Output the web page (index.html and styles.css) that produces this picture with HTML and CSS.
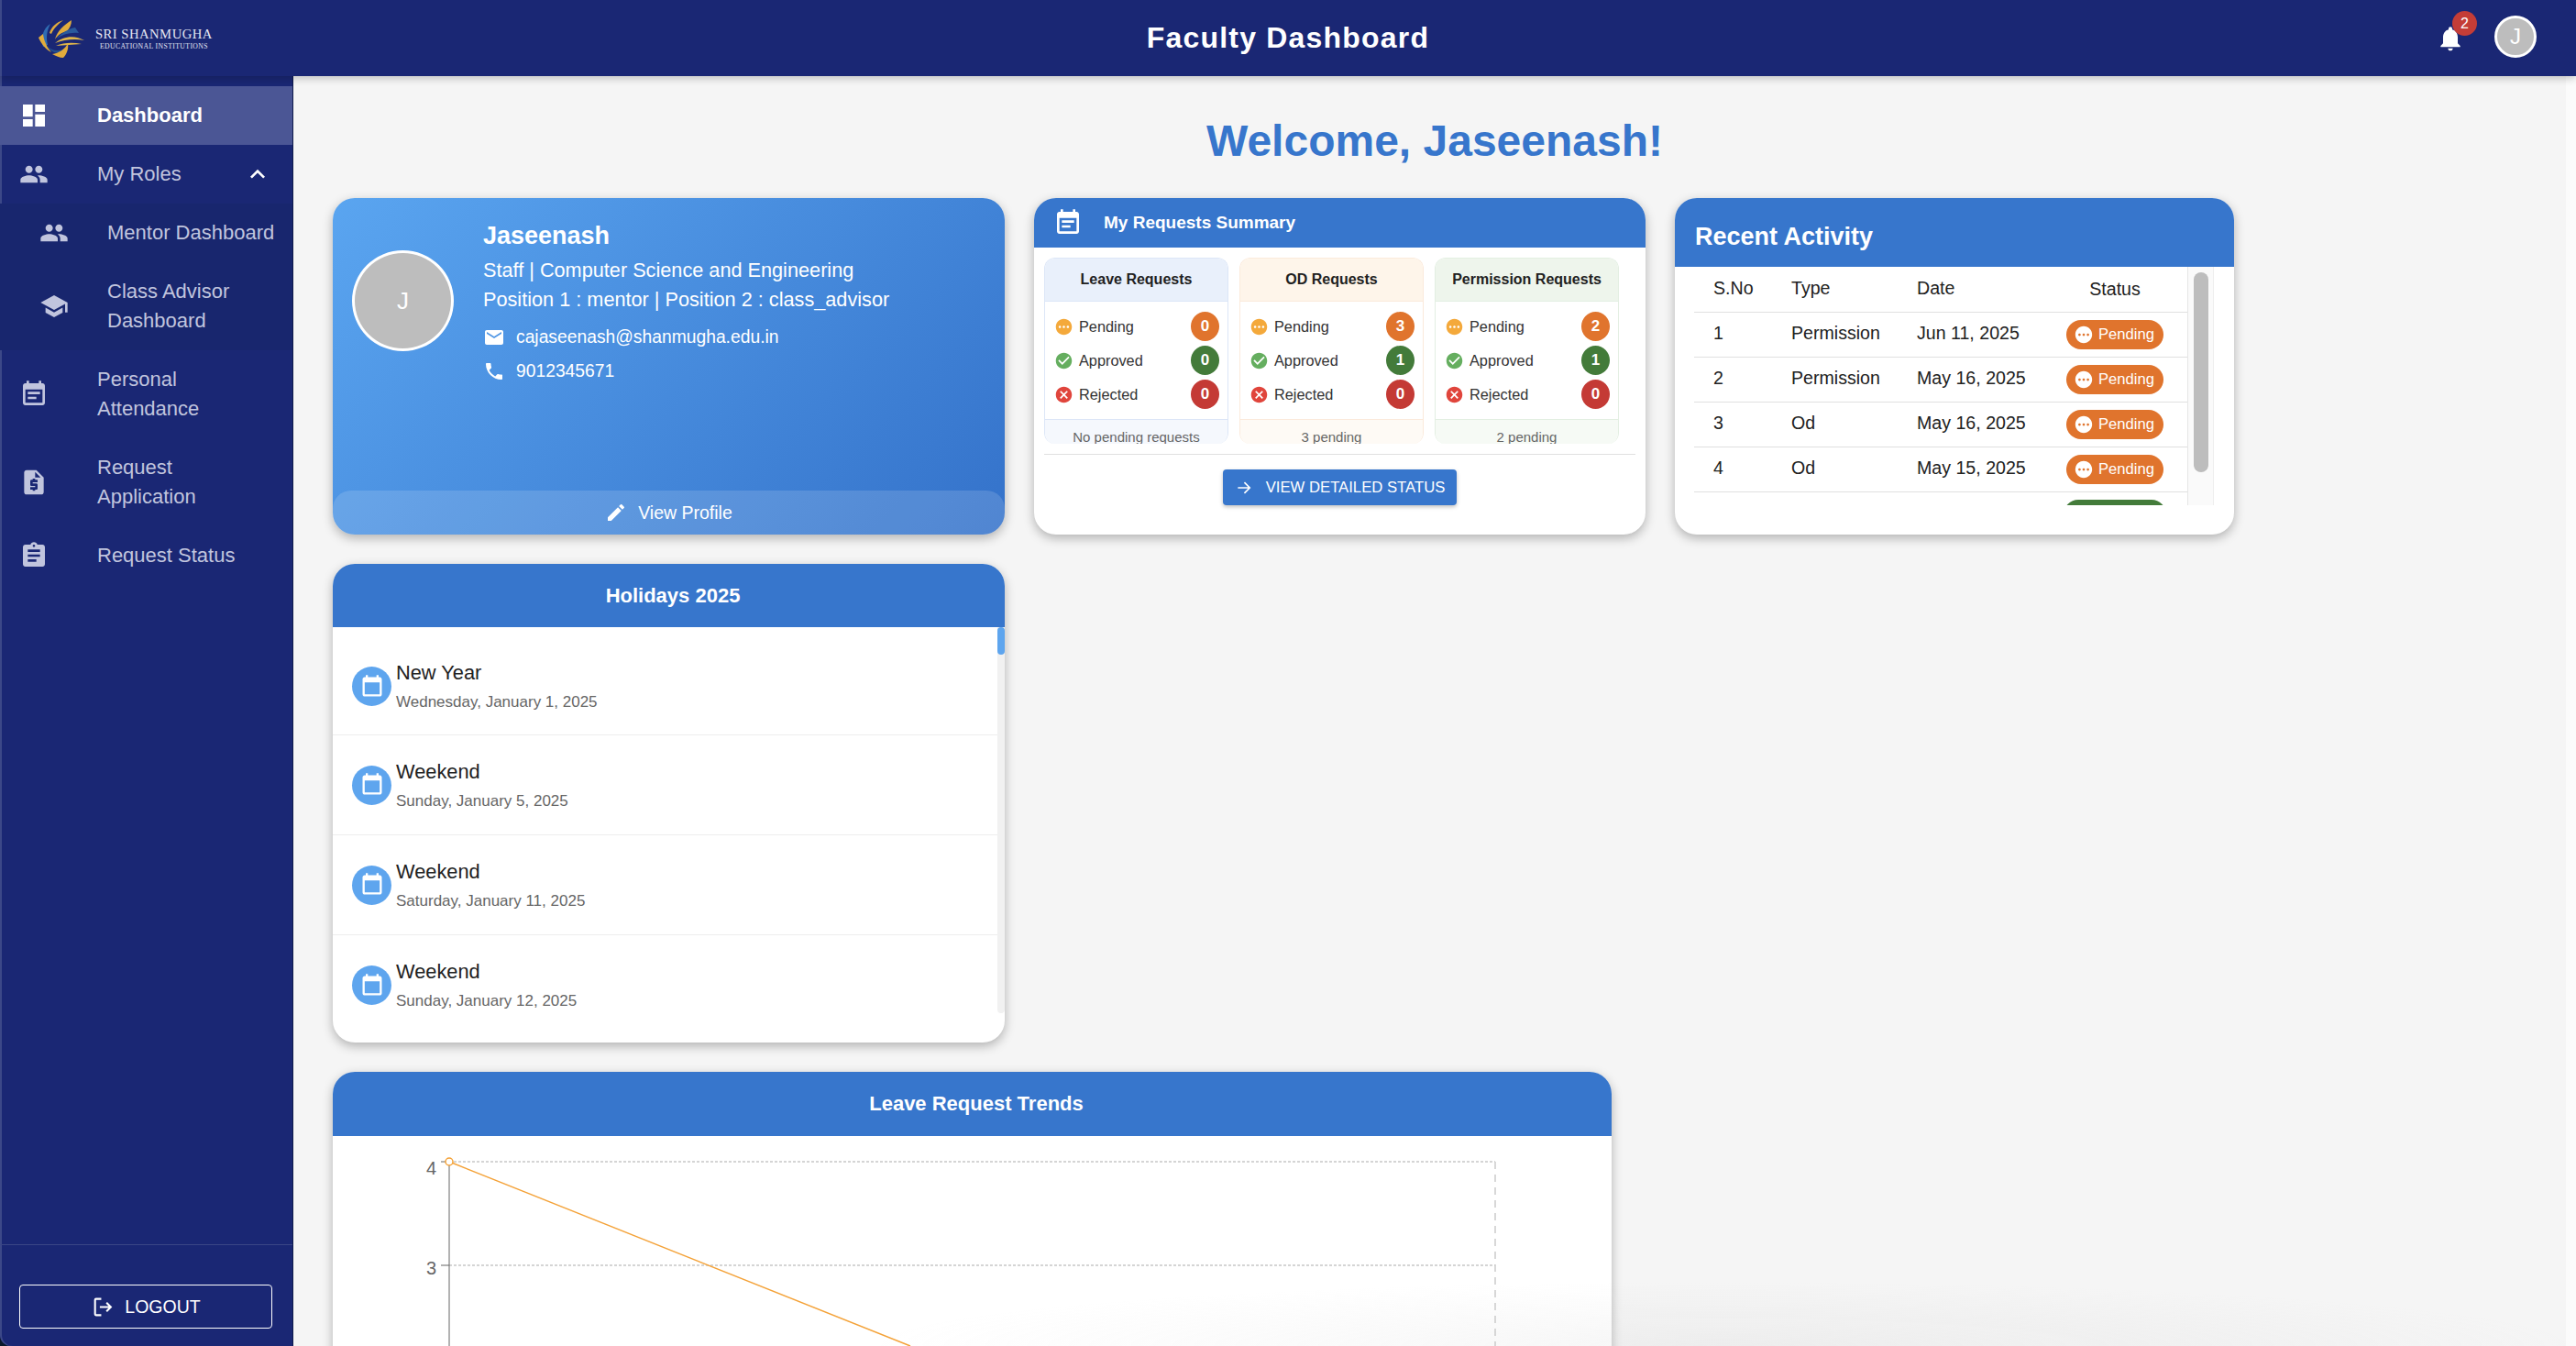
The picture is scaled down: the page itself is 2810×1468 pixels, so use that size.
FILE: index.html
```html
<!DOCTYPE html>
<html lang="en">
<head>
    <meta charset="UTF-8">
    <meta name="viewport" content="width=device-width, initial-scale=1.0">
    <title>Faculty Dashboard</title>
    <link rel="stylesheet" href="styles.css">
</head>
<body>
    <svg class="icon-defs" width="0" height="0">
        <defs>
            <symbol id="i-calnote" viewBox="0 0 24 24"><path d="M19 3h-1V1h-2v2H8V1H6v2H5c-1.11 0-2 .9-2 2v14c0 1.1.89 2 2 2h14c1.1 0 2-.9 2-2V5c0-1.1-.9-2-2-2zm0 16H5V8h14v11zM7 10h10v2H7zm0 4h7v2H7z"/></symbol>
            <symbol id="i-people" viewBox="0 0 24 24"><path d="M16 11c1.66 0 2.99-1.34 2.99-3S17.66 5 16 5s-3 1.34-3 3 1.34 3 3 3zm-8 0c1.66 0 2.99-1.34 2.99-3S9.66 5 8 5 5 6.34 5 8s1.34 3 3 3zm0 2c-2.33 0-7 1.17-7 3.5V19h14v-2.5C15 14.17 10.33 13 8 13zm8 0c-.29 0-.62.02-.97.05 1.16.84 1.97 1.97 1.97 3.45V19h6v-2.5c0-2.33-4.67-3.5-7-3.5z"/></symbol>
            <symbol id="i-pending" viewBox="0 0 24 24"><path d="M12 2C6.48 2 2 6.48 2 12s4.48 10 10 10 10-4.48 10-10S17.52 2 12 2zM7 13.5c-.83 0-1.5-.67-1.5-1.5s.67-1.5 1.5-1.5 1.5.67 1.5 1.5-.67 1.5-1.5 1.5zm5 0c-.83 0-1.5-.67-1.5-1.5s.67-1.5 1.5-1.5 1.5.67 1.5 1.5-.67 1.5-1.5 1.5zm5 0c-.83 0-1.5-.67-1.5-1.5s.67-1.5 1.5-1.5 1.5.67 1.5 1.5-.67 1.5-1.5 1.5z"/></symbol>
            <symbol id="i-approved" viewBox="0 0 24 24"><path d="M12 2C6.48 2 2 6.48 2 12s4.48 10 10 10 10-4.48 10-10S17.52 2 12 2zm-2 15-5-5 1.41-1.41L10 14.17l7.59-7.59L19 8l-9 9z"/></symbol>
            <symbol id="i-rejected" viewBox="0 0 24 24"><path d="M12 2C6.47 2 2 6.47 2 12s4.47 10 10 10 10-4.47 10-10S17.53 2 12 2zm5 13.59L15.59 17 12 13.41 8.41 17 7 15.59 10.59 12 7 8.41 8.41 7 12 10.59 15.59 7 17 8.41 13.41 12 17 15.59z"/></symbol>
            <symbol id="i-event" viewBox="0 0 24 24"><path d="M19 3h-1V1h-2v2H8V1H6v2H5c-1.1 0-2 .9-2 2v14c0 1.1.9 2 2 2h14c1.1 0 2-.9 2-2V5c0-1.1-.9-2-2-2zm0 16H5V8h14v11z"/></symbol>
        </defs>
    </svg>

    <header class="topbar">
        <div class="logo">
            <svg class="logo-mark" viewBox="0 0 50 42">
                <path d="M5 30C2 20 5 10 13 5 9 12 8 20 10 28z" fill="#2f6cb3"/>
                <path d="M12 15C14 8 20 3 27 1 22 5 17 9 14 16z" fill="#e2ac3c"/>
                <path d="M18 22C20 13 28 6 36 1 36 6 34 10 31 13 26 14 21 17 18 22z" fill="#e2ac3c"/>
                <path d="M20 21C26 14 34 10 40 9L44 15C35 14 27 16 20 21z" fill="#2a5a9c"/>
                <path d="M18 26C27 18 40 17 50 23 40 21 28 22 18 26z" fill="#e0b64a"/>
                <path d="M19 29C28 25 38 25 47 27 37 28 28 28 19 29z" fill="#e0b64a"/>
                <path d="M0 20L5 16C6 24 9 30 14 36 8 33 3 27 0 20z" fill="#e2ac3c"/>
                <path d="M9 29C14 34 20 35 27 33L22 37C17 37 12 34 9 29z" fill="#24508f"/>
                <path d="M15 38C22 37 29 33 32 26 33 32 31 38 27 42 23 42 19 40 15 38z" fill="#e2ac3c"/>
            </svg>
            <div class="logo-text">
                <span class="logo-name">SRI SHANMUGHA</span>
                <span class="logo-sub">EDUCATIONAL INSTITUTIONS</span>
            </div>
        </div>
        <h1 class="topbar-title">Faculty Dashboard</h1>
        <div class="topbar-right">
            <div class="bell">
                <svg viewBox="0 0 24 24"><path d="M12 22c1.1 0 2-.9 2-2h-4c0 1.1.89 2 2 2zm6-6v-5c0-3.07-1.64-5.64-4.5-6.32V4c0-.83-.67-1.5-1.5-1.5s-1.5.67-1.5 1.5v.68C7.63 5.36 6 7.92 6 11v5l-2 2v1h16v-1l-2-2z"/></svg>
                <span class="bell-count">2</span>
            </div>
            <div class="avatar avatar-small">J</div>
        </div>
    </header>

    <div class="layout">
        <aside class="sidebar">
            <nav class="nav">
                <a class="nav-item active">
                    <svg class="nav-icon" viewBox="0 0 24 24"><path d="M3 13h8V3H3v10zm0 8h8v-6H3v6zm10 0h8V11h-8v10zm0-18v6h8V3h-8z"/></svg>
                    <span>Dashboard</span>
                </a>
                <a class="nav-item">
                    <svg class="nav-icon"><use href="#i-people"/></svg>
                    <span>My Roles</span>
                    <svg class="nav-caret" viewBox="0 0 24 24"><path d="M12 8l-6 6 1.41 1.41L12 10.83l4.59 4.58L18 14z"/></svg>
                </a>
                <div class="nav-sub">
                    <a class="nav-item">
                        <svg class="nav-icon"><use href="#i-people"/></svg>
                        <span>Mentor Dashboard</span>
                    </a>
                    <a class="nav-item">
                        <svg class="nav-icon" viewBox="0 0 24 24"><path d="M5 13.18v4L12 21l7-3.82v-4L12 17l-7-3.82zM12 3 1 9l11 6 9-4.91V17h2V9L12 3z"/></svg>
                        <span>Class Advisor Dashboard</span>
                    </a>
                </div>
                <a class="nav-item">
                    <svg class="nav-icon"><use href="#i-calnote"/></svg>
                    <span>Personal Attendance</span>
                </a>
                <a class="nav-item">
                    <svg class="nav-icon" viewBox="0 0 24 24"><path d="M14 2H6c-1.1 0-1.99.9-1.99 2L4 20c0 1.1.89 2 1.99 2H18c1.1 0 2-.9 2-2V8l-6-6zm1 10h-4v1h3c.55 0 1 .45 1 1v3c0 .55-.45 1-1 1h-1v1h-2v-1H9v-2h4v-1h-3c-.55 0-1-.45-1-1v-3c0-.55.45-1 1-1h1V9h2v1h2v2zm-2-4V3.5L17.5 8H13z"/></svg>
                    <span>Request Application</span>
                </a>
                <a class="nav-item">
                    <svg class="nav-icon" viewBox="0 0 24 24"><path d="M19 3h-4.18C14.4 1.84 13.3 1 12 1s-2.4.84-2.82 2H5c-1.1 0-2 .9-2 2v14c0 1.1.9 2 2 2h14c1.1 0 2-.9 2-2V5c0-1.1-.9-2-2-2zm-7 0c.55 0 1 .45 1 1s-.45 1-1 1-1-.45-1-1 .45-1 1-1zm2 14H7v-2h7v2zm3-4H7v-2h10v2zm0-4H7V7h10v2z"/></svg>
                    <span>Request Status</span>
                </a>
            </nav>
            <div class="sidebar-foot">
                <button class="logout">
                    <svg viewBox="0 0 24 24"><path d="M11 3.5H5.5a1 1 0 0 0-1 1v15a1 1 0 0 0 1 1H11M9.5 12H21M16.5 7.5 21 12l-4.500 4.500"/></svg>
                    LOGOUT
                </button>
            </div>
        </aside>

        <main class="content">
            <h2 class="welcome">Welcome, Jaseenash!</h2>

            <div class="row-top">
                <section class="card profile">
                    <div class="profile-body">
                        <div class="avatar avatar-big">J</div>
                        <div class="profile-info">
                            <div class="profile-name">Jaseenash</div>
                            <div class="profile-line">Staff | Computer Science and Engineering</div>
                            <div class="profile-line">Position 1 : mentor | Position 2 : class_advisor</div>
                            <div class="contact contact-mail">
                                <svg viewBox="0 0 24 24"><path d="M20 4H4c-1.1 0-2 .9-2 2v12c0 1.1.9 2 2 2h16c1.1 0 2-.9 2-2V6c0-1.1-.9-2-2-2zm0 4-8 5-8-5V6l8 5 8-5v2z"/></svg>
                                <span>cajaseenash@shanmugha.edu.in</span>
                            </div>
                            <div class="contact">
                                <svg viewBox="0 0 24 24"><path d="M6.62 10.79c1.44 2.83 3.76 5.14 6.59 6.59l2.2-2.2c.27-.27.67-.36 1.02-.24 1.12.37 2.33.57 3.57.57.55 0 1 .45 1 1V20c0 .55-.45 1-1 1-9.39 0-17-7.61-17-17 0-.55.45-1 1-1h3.5c.55 0 1 .45 1 1 0 1.25.2 2.45.57 3.57.11.35.03.74-.25 1.02l-2.2 2.2z"/></svg>
                                <span>9012345671</span>
                            </div>
                        </div>
                    </div>
                    <div class="profile-foot">
                        <svg viewBox="0 0 24 24"><path d="M3 17.25V21h3.75L17.81 9.94l-3.75-3.75L3 17.25zM20.71 7.04a1 1 0 0 0 0-1.41l-2.34-2.34a1 1 0 0 0-1.41 0l-1.83 1.83 3.75 3.75 1.83-1.83z"/></svg>
                        View Profile
                    </div>
                </section>

                <section class="card summary">
                    <div class="card-head summary-head">
                        <svg><use href="#i-calnote"/></svg>
                        <span>My Requests Summary</span>
                    </div>
                    <div class="summary-cols">
                        <div class="req req-leave">
                            <div class="req-title">Leave Requests</div>
                            <div class="req-rows">
                                <div class="req-row"><svg class="st-pending"><use href="#i-pending"/></svg><span>Pending</span><b class="num num-orange">0</b></div>
                                <div class="req-row"><svg class="st-approved"><use href="#i-approved"/></svg><span>Approved</span><b class="num num-green">0</b></div>
                                <div class="req-row"><svg class="st-rejected"><use href="#i-rejected"/></svg><span>Rejected</span><b class="num num-red">0</b></div>
                            </div>
                            <div class="req-foot">No pending requests</div>
                        </div>
                        <div class="req req-od">
                            <div class="req-title">OD Requests</div>
                            <div class="req-rows">
                                <div class="req-row"><svg class="st-pending"><use href="#i-pending"/></svg><span>Pending</span><b class="num num-orange">3</b></div>
                                <div class="req-row"><svg class="st-approved"><use href="#i-approved"/></svg><span>Approved</span><b class="num num-green">1</b></div>
                                <div class="req-row"><svg class="st-rejected"><use href="#i-rejected"/></svg><span>Rejected</span><b class="num num-red">0</b></div>
                            </div>
                            <div class="req-foot">3 pending</div>
                        </div>
                        <div class="req req-perm">
                            <div class="req-title">Permission Requests</div>
                            <div class="req-rows">
                                <div class="req-row"><svg class="st-pending"><use href="#i-pending"/></svg><span>Pending</span><b class="num num-orange">2</b></div>
                                <div class="req-row"><svg class="st-approved"><use href="#i-approved"/></svg><span>Approved</span><b class="num num-green">1</b></div>
                                <div class="req-row"><svg class="st-rejected"><use href="#i-rejected"/></svg><span>Rejected</span><b class="num num-red">0</b></div>
                            </div>
                            <div class="req-foot">2 pending</div>
                        </div>
                    </div>
                    <div class="summary-action">
                        <button class="btn-status">
                            <svg viewBox="0 0 24 24"><path d="M4 12h15.500M12.500 5l7 7-7 7"/></svg>
                            VIEW DETAILED STATUS
                        </button>
                    </div>
                </section>

                <section class="card recent">
                    <div class="card-head recent-head">Recent Activity</div>
                    <div class="recent-scroll">
                        <table class="recent-table">
                            <thead>
                                <tr><th>S.No</th><th>Type</th><th>Date</th><th class="center">Status</th></tr>
                            </thead>
                            <tbody>
                                <tr><td>1</td><td>Permission</td><td>Jun 11, 2025</td><td class="center"><span class="chip"><svg><use href="#i-pending"/></svg>Pending</span></td></tr>
                                <tr><td>2</td><td>Permission</td><td>May 16, 2025</td><td class="center"><span class="chip"><svg><use href="#i-pending"/></svg>Pending</span></td></tr>
                                <tr><td>3</td><td>Od</td><td>May 16, 2025</td><td class="center"><span class="chip"><svg><use href="#i-pending"/></svg>Pending</span></td></tr>
                                <tr><td>4</td><td>Od</td><td>May 15, 2025</td><td class="center"><span class="chip"><svg><use href="#i-pending"/></svg>Pending</span></td></tr>
                                <tr><td></td><td></td><td></td><td class="center"><span class="chip chip-green"></span></td></tr>
                            </tbody>
                        </table>
                        <div class="recent-track"><div class="recent-thumb"></div></div>
                    </div>
                </section>
            </div>

            <section class="card holidays">
                <div class="card-head center-head">Holidays 2025</div>
                <div class="holiday-wrap">
                    <ul class="holiday-list">
                        <li class="holiday"><span class="holiday-icon"><svg><use href="#i-event"/></svg></span><div><div class="holiday-name">New Year</div><div class="holiday-date">Wednesday, January 1, 2025</div></div></li>
                        <li class="holiday"><span class="holiday-icon"><svg><use href="#i-event"/></svg></span><div><div class="holiday-name">Weekend</div><div class="holiday-date">Sunday, January 5, 2025</div></div></li>
                        <li class="holiday"><span class="holiday-icon"><svg><use href="#i-event"/></svg></span><div><div class="holiday-name">Weekend</div><div class="holiday-date">Saturday, January 11, 2025</div></div></li>
                        <li class="holiday"><span class="holiday-icon"><svg><use href="#i-event"/></svg></span><div><div class="holiday-name">Weekend</div><div class="holiday-date">Sunday, January 12, 2025</div></div></li>
                    </ul>
                    <div class="holiday-track"><div class="holiday-thumb"></div></div>
                </div>
            </section>

            <section class="card trends">
                <div class="card-head center-head">Leave Request Trends</div>
                <svg class="chart-svg" width="1395" height="229" viewBox="0 0 1395 229">
                    <path class="grid" d="M127 28H1268M127 141H1268"/>
                    <path class="grid-v" d="M1268 28V229"/>
                    <path class="axis" d="M127 28V229M118 28H127M118 141H127"/>
                    <path class="trend-line" d="M127 28L630 229"/>
                    <circle class="trend-dot" cx="127" cy="28" r="4"/>
                    <text x="113" y="42" class="tick">4</text>
                    <text x="113" y="151" class="tick">3</text>
                </svg>
            </section>
        </main>
    </div>
    <div class="bottom-smudge"></div>
</body>
</html>
```

FILE: styles.css
```css
* {
    box-sizing: border-box;
}

html, body {
    height: 100%;
}

body {
    margin: 0;
    font-family: 'Liberation Sans', Arial, sans-serif;
    background-color: #0a1a2c;
    color: #212121;
    overflow: hidden;
}

.icon-defs {
    position: absolute;
}

/* top bar */
.topbar {
    height: 83px;
    background-color: #1a2774;
    color: #fff;
    display: flex;
    align-items: center;
    justify-content: space-between;
    padding: 0 43px 0 42px;
    position: relative;
    z-index: 3;
    box-shadow: 0 3px 8px rgba(0, 0, 0, 0.2), inset 2px 0 0 #3c4888;
}

.logo {
    display: flex;
    align-items: center;
    gap: 12px;
}

.logo-mark {
    width: 50px;
    height: 42px;
}

.logo-text {
    display: flex;
    flex-direction: column;
    align-items: center;
    font-family: 'Liberation Serif', serif;
    color: #e4e6f2;
}

.logo-name {
    font-size: 14.7px;
    letter-spacing: 0.45px;
}

.logo-sub {
    font-size: 7.7px;
    letter-spacing: 0.4px;
}

.topbar-title {
    position: absolute;
    left: 0;
    right: 0;
    margin: 0;
    text-align: center;
    font-size: 32px;
    font-weight: 700;
    letter-spacing: 1.2px;
    pointer-events: none;
}

.topbar-right {
    display: flex;
    align-items: center;
    gap: 32px;
}

.bell {
    position: relative;
    width: 32px;
    height: 32px;
}

.bell svg {
    width: 32px;
    height: 32px;
    fill: #fff;
    display: block;
}

.bell-count {
    position: absolute;
    top: -14px;
    right: -13px;
    width: 27px;
    height: 27px;
    border-radius: 50%;
    background-color: #c43d37;
    color: #fff;
    font-size: 16px;
    line-height: 27px;
    text-align: center;
}

.avatar {
    border-radius: 50%;
    background-color: #bdbdbd;
    color: #fff;
    border: 3px solid #fff;
    display: flex;
    align-items: center;
    justify-content: center;
    flex-shrink: 0;
}

.avatar-small {
    width: 46px;
    height: 46px;
    font-size: 24px;
    margin-bottom: 3px;
}

.avatar-big {
    width: 111px;
    height: 110px;
    font-size: 26px;
    margin-top: 31px;
}

/* sidebar */
.layout {
    display: flex;
    height: calc(100% - 83px);
}

.sidebar {
    width: 320px;
    flex-shrink: 0;
    background-color: #1a2774;
    border-right: 1px solid #0e1a4a;
    border-bottom-left-radius: 12px;
    box-shadow: inset 2px 0 0 #3c4888;
    display: flex;
    flex-direction: column;
    justify-content: space-between;
    padding-top: 11px;
    position: relative;
    z-index: 2;
}

.nav-item {
    display: flex;
    align-items: center;
    min-height: 64px;
    padding: 16px 12px 16px 21px;
    color: #c1c5de;
    font-size: 22px;
    line-height: 32px;
}

.nav-item.active {
    background-color: #4b5695;
    color: #fff;
    font-weight: 700;
}

.nav-icon {
    width: 32px;
    height: 32px;
    fill: currentColor;
    margin-right: 53px;
    flex-shrink: 0;
}

.nav-item > span {
    flex: 1;
    max-width: 190px;
}

.nav-caret {
    width: 32px;
    height: 32px;
    fill: #fff;
    flex-shrink: 0;
    margin-left: auto;
    margin-right: 10px;
}

.nav-sub {
    background-color: #18266e;
}

.nav-sub .nav-item {
    padding-left: 43px;
}

.nav-sub .nav-icon {
    margin-right: 42px;
}

.sidebar-foot {
    border-top: 1px solid #3a4686;
    height: 111px;
    padding: 43px 22px 0 21px;
}

.logout {
    width: 100%;
    height: 48px;
    border: 1.5px solid #fff;
    border-radius: 4px;
    background: transparent;
    color: #fff;
    font-family: 'Liberation Sans', Arial, sans-serif;
    font-size: 19.5px;
    display: flex;
    align-items: center;
    justify-content: center;
    gap: 12px;
}

.logout svg {
    width: 25px;
    height: 25px;
    fill: none;
    stroke: #fff;
    stroke-width: 2;
}

/* main column */
.content {
    flex: 1;
    min-width: 0;
    padding: 0 43px;
    position: relative;
    background-color: #f5f5f5;
    border-right: 11px solid #fbfbfb;
}

.welcome {
    margin: 0 -11px 0 0;
    height: 133px;
    line-height: 142px;
    text-align: center;
    color: #3776cc;
    font-size: 48px;
    font-weight: 700;
}

.row-top {
    display: flex;
    gap: 32px;
    align-items: stretch;
    height: 367px;
}

.card {
    background-color: #fff;
    border-radius: 24px;
    box-shadow: 0 4px 12px rgba(0, 0, 0, 0.28);
    overflow: hidden;
    flex-shrink: 0;
}

.card-head {
    background-color: #3776cc;
    color: #fff;
    font-weight: 700;
}

.center-head {
    height: 69px;
    display: flex;
    align-items: center;
    justify-content: center;
    padding-left: 9px;
    font-size: 22px;
}

/* profile card */
.profile {
    width: 733px;
    display: flex;
    flex-direction: column;
    justify-content: space-between;
    background: linear-gradient(135deg, #5aa5f0, #3472ca);
    color: #fff;
}

.profile-body {
    display: flex;
    gap: 32px;
    padding: 26px 21px 0;
}

.profile-name {
    font-size: 27px;
    font-weight: 700;
    line-height: 30px;
    margin-bottom: 7px;
}

.profile-line {
    font-size: 21.7px;
    line-height: 32px;
}

.contact {
    display: flex;
    align-items: center;
    gap: 12px;
    font-size: 19.3px;
    height: 37px;
}

.contact-mail {
    margin-top: 6px;
}

.contact svg {
    width: 24px;
    height: 24px;
    fill: #fff;
    flex-shrink: 0;
}

.profile-foot {
    height: 48px;
    background-color: rgba(255, 255, 255, 0.14);
    border-radius: 20px 20px 24px 24px;
    display: flex;
    align-items: center;
    justify-content: center;
    gap: 12px;
    font-size: 19.5px;
}

.profile-foot svg {
    width: 24px;
    height: 24px;
    fill: #fff;
}

/* requests summary */
.summary {
    width: 667px;
}

.summary-head {
    height: 54px;
    display: flex;
    align-items: center;
    gap: 23px;
    padding-left: 21px;
    font-size: 19px;
}

.summary-head svg {
    width: 32px;
    height: 32px;
    fill: #fff;
}

.summary-cols {
    display: flex;
    gap: 12px;
    padding: 11px 11px 0;
    height: 214px;
}

.req {
    width: 201px;
    height: 203px;
    border: 1px solid;
    border-bottom: 0;
    border-radius: 12px;
    overflow: hidden;
    display: flex;
    flex-direction: column;
}

.req-title {
    height: 47px;
    flex-shrink: 0;
    display: flex;
    align-items: center;
    justify-content: center;
    font-size: 16px;
    font-weight: 700;
    border-bottom: 1px solid;
    border-color: inherit;
}

.req-leave { border-color: #dce6f7; }
.req-leave .req-title { background-color: #e9f0fb; }
.req-leave .req-foot { background-color: #f5f8fd; }
.req-od { border-color: #fbeadb; }
.req-od .req-title { background-color: #fef5ea; }
.req-od .req-foot { background-color: #fefaf5; }
.req-perm { border-color: #e3efe2; }
.req-perm .req-title { background-color: #eef5ec; }
.req-perm .req-foot { background-color: #f6faf5; }

.req-rows {
    height: 128px;
    flex-shrink: 0;
    padding: 11px 9px 0 10px;
    display: flex;
    flex-direction: column;
    gap: 5px;
}

.req-row {
    display: flex;
    align-items: center;
    height: 32px;
    font-size: 16.3px;
    color: #333;
}

.req-row span {
    flex: 1;
    margin-left: 6px;
}

.req-row svg {
    width: 21px;
    height: 21px;
    flex-shrink: 0;
}

.st-pending { fill: #f4a93b; }
.st-approved { fill: #65ae5f; }
.st-rejected { fill: #e0453c; }

.num {
    width: 31px;
    height: 32px;
    border-radius: 50%;
    color: #fff;
    font-size: 17px;
    text-align: center;
    line-height: 32px;
}

.num-orange { background-color: #e0742d; }
.num-green { background-color: #437b3a; }
.num-red { background-color: #c43a35; }

.req-foot {
    flex: 1;
    text-align: center;
    font-size: 15px;
    line-height: 18px;
    padding-top: 10px;
    color: #666;
    border-top: 1px solid;
    border-color: inherit;
}

.summary-action {
    margin: 11px 11px 0;
    border-top: 1px solid #e0e0e0;
    padding-top: 16px;
    display: flex;
    justify-content: center;
}

.btn-status {
    width: 255px;
    height: 39px;
    border: 0;
    border-radius: 4px;
    background-color: #3776cc;
    color: #fff;
    font-family: 'Liberation Sans', Arial, sans-serif;
    font-size: 16.7px;
    display: flex;
    align-items: center;
    justify-content: center;
    gap: 14px;
    box-shadow: 0 2px 4px rgba(0, 0, 0, 0.25);
}

.btn-status svg {
    width: 20px;
    height: 20px;
    fill: none;
    stroke: #fff;
    stroke-width: 2;
}

/* recent activity */
.recent {
    width: 610px;
}

.recent-head {
    height: 75px;
    padding: 24px 22px 0;
    font-size: 27px;
    line-height: 36px;
}

.recent-scroll {
    height: 260px;
    margin: 0 22px 0 21px;
    overflow: hidden;
    position: relative;
    padding-right: 29px;
}

.recent-table {
    width: 100%;
    border-collapse: collapse;
    table-layout: fixed;
    font-size: 19.6px;
}

.recent-table th,
.recent-table td {
    height: 49px;
    padding: 0 0 2px 21px;
    font-weight: 400;
    text-align: left;
    border-bottom: 1px solid #e0e0e0;
}

.recent-table th:nth-child(1) { width: 85px; }
.recent-table th:nth-child(2) { width: 137px; }
.recent-table th:nth-child(3) { width: 166px; }

.recent-table .center {
    text-align: center;
    padding: 0 8px 0 0;
}

.chip {
    display: inline-flex;
    align-items: center;
    gap: 5px;
    height: 32px;
    padding: 0 10px 0 8px;
    border-radius: 16px;
    background-color: #e0742d;
    color: #fff;
    font-size: 16.6px;
    vertical-align: middle;
}

.chip svg {
    width: 22px;
    height: 22px;
    fill: #fff;
}

.chip-green {
    width: 112px;
    background-color: #437b3a;
}

.recent-track {
    position: absolute;
    top: 0;
    right: 0;
    bottom: 0;
    width: 29px;
    background-color: #fafafa;
    border-left: 1px solid #e6e6e6;
    border-right: 1px solid #eee;
}

.recent-thumb {
    width: 16px;
    height: 218px;
    margin: 6px 0 0 6px;
    border-radius: 8px;
    background-color: #bdbdbd;
}

/* holidays */
.holidays {
    width: 733px;
    height: 522px;
    margin-top: 32px;
}

.holiday-wrap {
    display: flex;
    height: 421px;
}

.holiday-list {
    flex: 1;
    list-style: none;
    margin: 0;
    padding: 0;
}

.holiday {
    height: 109px;
    display: flex;
    align-items: center;
    gap: 5px;
    padding: 0 21px;
    border-bottom: 1px solid #eee;
}

.holiday:first-child {
    height: 118px;
    padding-top: 12px;
}

.holiday:last-child {
    border-bottom: 0;
}

.holiday-icon {
    width: 43px;
    height: 43px;
    border-radius: 50%;
    background-color: #5ea5ee;
    display: flex;
    align-items: center;
    justify-content: center;
    flex-shrink: 0;
}

.holiday-icon svg {
    width: 28px;
    height: 28px;
    fill: #fff;
}

.holiday-name {
    font-size: 21.8px;
    line-height: 30px;
    margin-bottom: 5px;
}

.holiday-date {
    font-size: 17px;
    line-height: 24px;
    color: #666;
}

.holiday-track {
    width: 8px;
    height: 421px;
    background-color: #f1f1f1;
    border-radius: 0 0 4px 4px;
}

.holiday-thumb {
    width: 8px;
    height: 30px;
    background-color: #5ea5ee;
    border-radius: 4px;
}

/* chart */
.trends {
    width: 1395px;
    margin-top: 32px;
    height: 500px;
}

.trends .center-head {
    height: 70px;
}

.chart-svg {
    display: block;
}

.grid {
    stroke: #c8c8c8;
    stroke-width: 1.5;
    stroke-dasharray: 3 2;
    fill: none;
}

.grid-v {
    stroke: #ccc;
    stroke-width: 1.5;
    stroke-dasharray: 8 6;
    fill: none;
}

.axis {
    stroke: #666;
    stroke-width: 1;
    fill: none;
}

.trend-line {
    stroke: #f4a238;
    stroke-width: 1.5;
    fill: none;
}

.trend-dot {
    fill: #fff;
    stroke: #f4a238;
    stroke-width: 1.5;
}

.tick {
    font-size: 20px;
    fill: #666;
    text-anchor: end;
}

/* soft smudge along the bottom edge of the screenshot */
.bottom-smudge {
    position: fixed;
    left: 950px;
    right: 0;
    bottom: 0;
    height: 70px;
    background: radial-gradient(ellipse 50% 100% at 50% 100%, rgba(200, 200, 200, 0.16), rgba(200, 200, 200, 0));
    z-index: 4;
    pointer-events: none;
}
```
